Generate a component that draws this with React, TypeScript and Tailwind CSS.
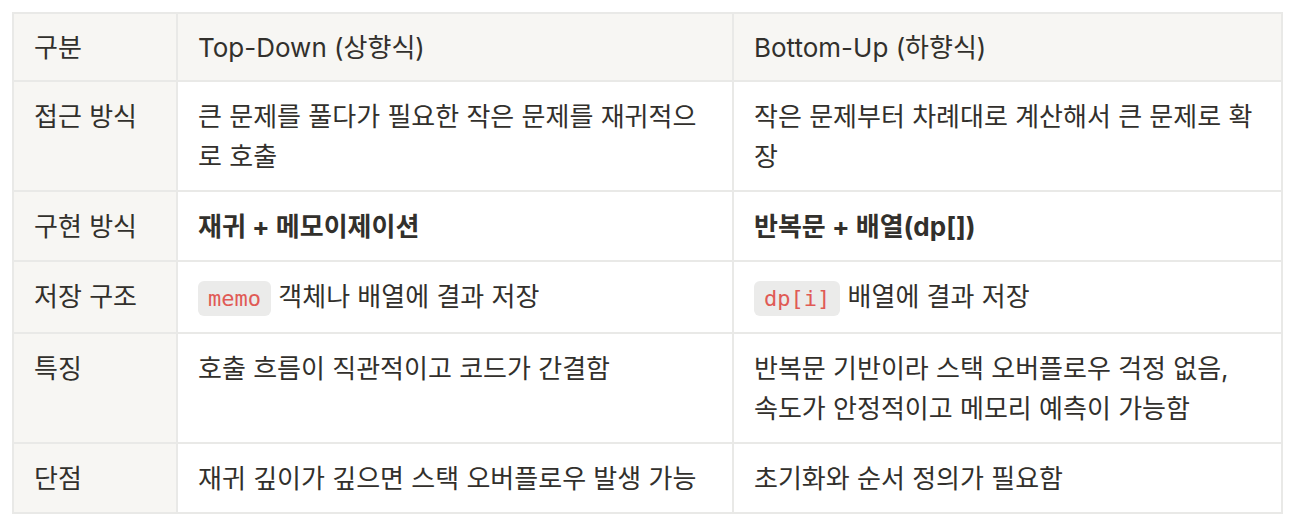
const rows: { label: string; top: React.ReactNode; bottom: React.ReactNode }[] = [
  {
    label: '접근 방식',
    top: '큰 문제를 풀다가 필요한 작은 문제를 재귀적으로 호출',
    bottom: '작은 문제부터 차례대로 계산해서 큰 문제로 확장',
  },
  {
    label: '구현 방식',
    top: <strong className="font-bold">재귀 + 메모이제이션</strong>,
    bottom: <strong className="font-bold">반복문 + 배열(dp[])</strong>,
  },
  {
    label: '저장 구조',
    top: (
      <>
        <Code>memo</Code> 객체나 배열에 결과 저장
      </>
    ),
    bottom: (
      <>
        <Code>dp[i]</Code> 배열에 결과 저장
      </>
    ),
  },
  {
    label: '특징',
    top: '호출 흐름이 직관적이고 코드가 간결함',
    bottom: (
      <>
        반복문 기반이라 스택 오버플로우 걱정 없음,
        <br />
        속도가 안정적이고 메모리 예측이 가능함
      </>
    ),
  },
  {
    label: '단점',
    top: '재귀 깊이가 깊으면 스택 오버플로우 발생 가능',
    bottom: '초기화와 순서 정의가 필요함',
  },
]

function Code({ children }: { children: React.ReactNode }) {
  return (
    <code className="rounded-[6px] bg-[#ebebea] px-[10px] py-[5px] font-['DejaVu_Sans_Mono',monospace] text-[22px] text-[#e05a55]">
      {children}
    </code>
  )
}

const cell = 'border-2 border-[#e9e9e7] px-5 align-top'

export default function App() {
  return (
    <div className="min-h-screen bg-white p-3 font-['Inter','Noto_Sans_CJK_KR',sans-serif] text-[26px] leading-[40px] text-[#32302c]">
      <table className="w-[1269px] table-fixed border-collapse">
        <colgroup>
          <col className="w-[164px]" />
          <col className="w-[556px]" />
          <col className="w-[549px]" />
        </colgroup>
        <thead>
          <tr className="bg-[#f7f6f3] text-left">
            <th className={`${cell} pt-[14px] pb-[12px] font-normal`}>구분</th>
            <th className={`${cell} pt-[14px] pb-[12px] font-normal`}>Top-Down (상향식)</th>
            <th className={`${cell} pt-[14px] pb-[12px] font-normal`}>Bottom-Up (하향식)</th>
          </tr>
        </thead>
        <tbody>
          {rows.map((r) => (
            <tr key={r.label}>
              <td className={`${cell} pt-[15px] pb-[13px] bg-[#f7f6f3]`}>{r.label}</td>
              <td className={`${cell} pt-[15px] pb-[13px]`}>{r.top}</td>
              <td className={`${cell} pt-[15px] pb-[13px]`}>{r.bottom}</td>
            </tr>
          ))}
        </tbody>
      </table>
    </div>
  )
}
